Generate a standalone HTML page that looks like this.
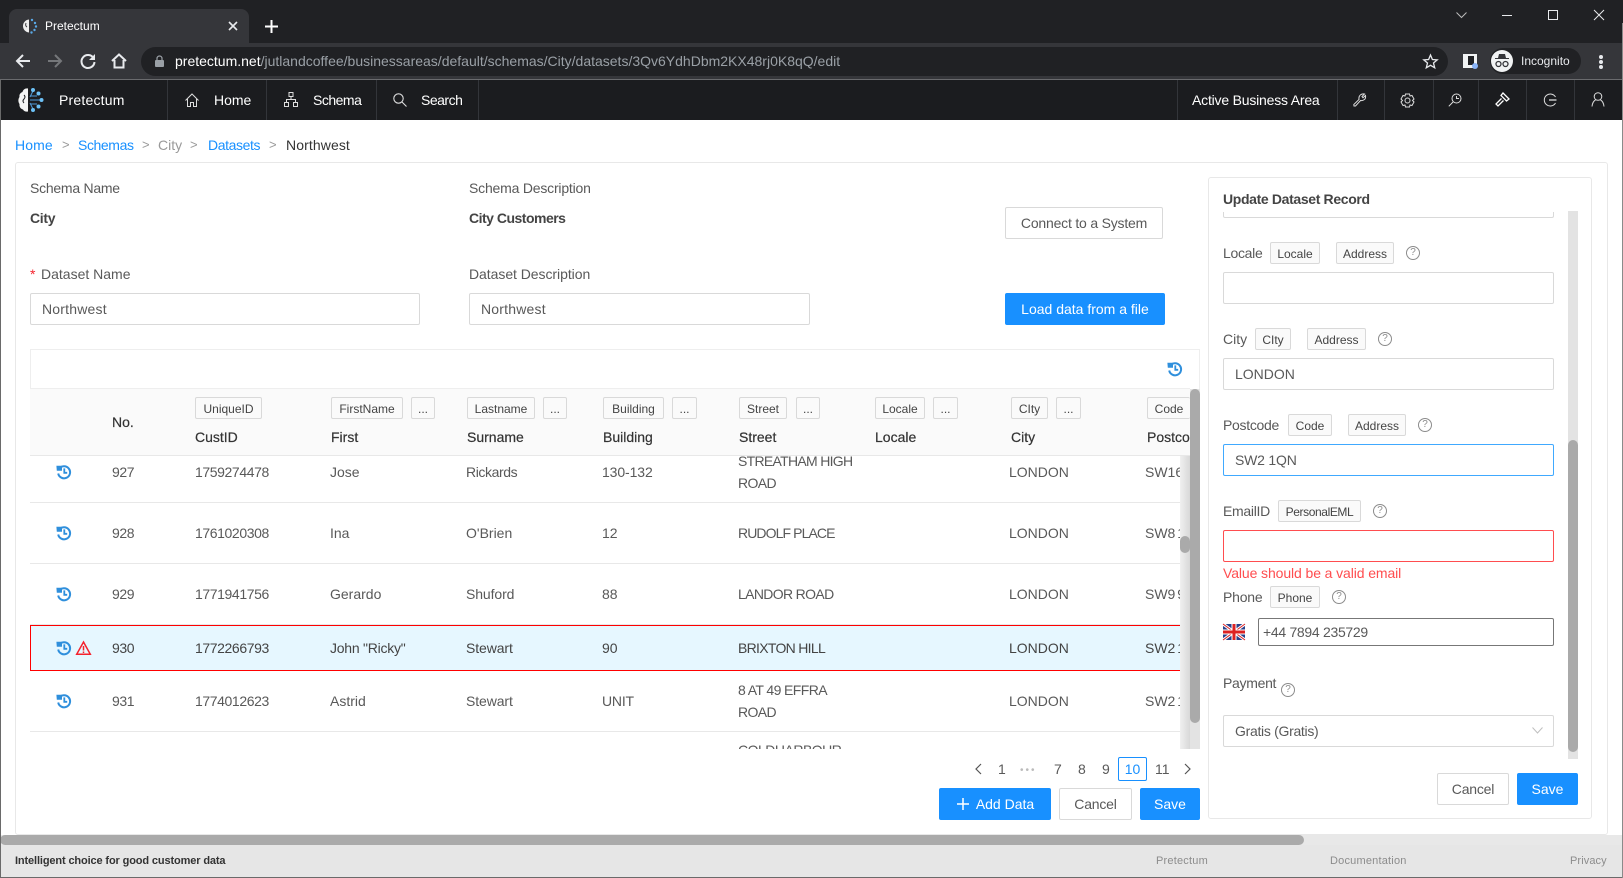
<!DOCTYPE html>
<html><head><meta charset="utf-8"><title>Pretectum</title>
<style>
*{box-sizing:border-box}
html,body{margin:0;padding:0;width:1623px;height:878px;overflow:hidden;background:#fff;font-family:"Liberation Sans",sans-serif;font-size:14px;color:#595959}
.a{position:absolute}
.t{position:absolute;white-space:nowrap;line-height:20px;height:20px}
.w{color:#fff}
.lnk{color:#1890ff}
.b{font-weight:bold;color:#444}
.h{color:#333;font-size:14px;-webkit-text-stroke:.2px #333}
.n{letter-spacing:-.4px}
.tag{position:absolute;height:22px;line-height:22px;border:1px solid #d9d9d9;border-radius:2px;background:#fafafa;font-size:12px;color:#444;text-align:center;white-space:nowrap;overflow:hidden}
.inp{position:absolute;height:32px;border:1px solid #d9d9d9;border-radius:2px;background:#fff;line-height:30px;padding-left:11px;color:#595959;white-space:nowrap}
.btn{position:absolute;height:32px;border:1px solid #d9d9d9;border-radius:2px;background:#fff;line-height:30px;text-align:center;color:#595959;white-space:nowrap}
.pri{background:#1890ff;border-color:#1890ff;color:#fff}
.v{position:absolute;top:80px;height:40px;width:1px;background:#33353a}
.line{position:absolute;height:1px;background:#e8e8e8;left:30px;width:1150px}
svg{position:absolute;overflow:visible}
.q{position:absolute;width:14px;height:14px;border:1px solid #8c8c8c;border-radius:50%;font-size:10px;line-height:12px;text-align:center;color:#8c8c8c}
.pc{word-spacing:-2px}
</style></head><body>
<svg width="0" height="0" style="position:absolute"><defs>
<symbol id="hist" viewBox="0 0 16 16"><path d="M3.200 4.800A6 6 0 1 1 2.200 9.500" fill="none" stroke="#2f8fdc" stroke-width="2"/><path d="M.4 1.800 L6 1.800 L6 6.800 L.8 6.800Z" fill="#2f8fdc"/><path d="M8.300 4.400V8.800H11.200" fill="none" stroke="#2f8fdc" stroke-width="1.800"/></symbol>
</defs></svg>

<!-- Chrome -->
<div class="a" style="left:0;top:0;width:1623px;height:43px;background:#202124"></div>
<div class="a" style="left:9px;top:9px;width:240px;height:34px;background:#35363a;border-radius:8px 8px 0 0"></div>
<div class="a" style="left:0;top:43px;width:1623px;height:36px;background:#35363a"></div>
<div class="a" style="left:0;top:79px;width:1623px;height:1px;background:#6a6b6e"></div>
<svg style="left:22px;top:18px" width="16" height="16" viewBox="0 0 16 16"><path d="M7 1.500C3 2 1 5 1 8s2 6 6 6.500Z" fill="#eee"/><path d="M4 5Q3 8 5 9" fill="none" stroke="#35363a"/><g fill="#5aa9e6"><circle cx="10" cy="2" r="1.200"/><circle cx="13" cy="5" r="1.200"/><circle cx="14" cy="8.500" r="1.200"/><circle cx="12.500" cy="12" r="1.200"/><circle cx="9.500" cy="14.500" r="1.200"/></g></svg>
<div class="t w" style="left:45px;top:16px;font-size:12px">Pretectum</div>
<svg style="left:228px;top:21px" width="10" height="10"><path d="M1 1L9 9M9 1L1 9" stroke="#e8eaed" stroke-width="1.600"/></svg>
<svg style="left:265px;top:20px" width="13" height="13"><path d="M6.500 0V13M0 6.500H13" stroke="#fff" stroke-width="2"/></svg>
<svg style="left:15px;top:53px" width="16" height="16"><path d="M15 8H2M8 2L2 8L8 14" fill="none" stroke="#e8eaed" stroke-width="2"/></svg>
<svg style="left:47px;top:53px" width="16" height="16"><path d="M1 8H14M8 2L14 8L8 14" fill="none" stroke="#75777a" stroke-width="2"/></svg>
<svg style="left:80px;top:53px" width="16" height="16"><path d="M13.500 5A6.500 6.500 0 1 0 14.500 9" fill="none" stroke="#e8eaed" stroke-width="2"/><path d="M15 1V7H9Z" fill="#e8eaed"/></svg>
<svg style="left:111px;top:53px" width="16" height="16"><path d="M1 8L8 1.500L15 8M3.500 7V14.500H12.500V7" fill="none" stroke="#e8eaed" stroke-width="2"/></svg>
<div class="a" style="left:141px;top:47px;width:1307px;height:29px;background:#202124;border-radius:15px"></div>
<svg style="left:155px;top:55px" width="9" height="12"><rect y="5" width="9" height="7" rx="1" fill="#9aa0a6"/><path d="M2 5V3.500a2.500 2.500 0 0 1 5 0V5" fill="none" stroke="#9aa0a6" stroke-width="1.200"/></svg>
<div class="t" style="left:175px;top:51px;color:#9aa0a6;font-size:14px"><span style="color:#fff">pretectum.net</span>/jutlandcoffee/businessareas/default/schemas/City/datasets/3Qv6YdhDbm2KX48rj0K8qQ/edit</div>
<svg style="left:1423px;top:54px" width="15" height="15" viewBox="0 0 15 15"><path d="M7.500 1L9.400 5.500L14.200 5.900L10.500 9L11.700 13.800L7.500 11.300L3.300 13.800L4.500 9L.8 5.900L5.600 5.500Z" fill="none" stroke="#e8eaed" stroke-width="1.300"/></svg>
<div class="a" style="left:1463px;top:54px;width:14px;height:14px;background:#f1f3f4"></div><div class="a" style="left:1468px;top:56px;width:6px;height:9px;background:#202124"></div><div class="a" style="left:1472px;top:63px;width:6px;height:6px;background:#8ab4f8;border-radius:50%"></div>
<div class="a" style="left:1490px;top:48px;width:91px;height:26px;background:#202124;border-radius:13px"></div>
<div class="a" style="left:1491px;top:50px;width:22px;height:22px;background:#f1f3f4;border-radius:50%"></div>
<svg style="left:1494px;top:54px" width="16" height="14" viewBox="0 0 16 14"><path d="M4 4L5 0H11L12 4H15V5H1V4Z" fill="#35363a"/><circle cx="4.500" cy="10" r="2.500" fill="none" stroke="#35363a" stroke-width="1.300"/><circle cx="11.500" cy="10" r="2.500" fill="none" stroke="#35363a" stroke-width="1.300"/></svg>
<div class="t" style="left:1521px;top:51px;font-size:12px;color:#e8eaed">Incognito</div>
<div class="a" style="left:1599px;top:55px;width:4px;height:4px;background:#e8eaed;border-radius:50%"></div><div class="a" style="left:1599px;top:60px;width:4px;height:4px;background:#e8eaed;border-radius:50%"></div><div class="a" style="left:1599px;top:65px;width:4px;height:4px;background:#e8eaed;border-radius:50%"></div>
<svg style="left:1456px;top:12px" width="11" height="6"><path d="M.5 .5L5.500 5.500L10.500 .5" fill="none" stroke="#bbb"/></svg>
<div class="a" style="left:1502px;top:15px;width:10px;height:1px;background:#e8eaed"></div>
<div class="a" style="left:1548px;top:10px;width:10px;height:10px;border:1px solid #e8eaed"></div>
<svg style="left:1594px;top:10px" width="10" height="10"><path d="M0 0L10 10M10 0L0 10" stroke="#e8eaed"/></svg>

<!-- App nav -->
<div class="a" style="left:0;top:80px;width:1623px;height:40px;background:#1b1c1f"></div>
<svg style="left:18px;top:87px" width="26" height="26" viewBox="0 0 26 26"><path d="M10 1.500C7 1 5 3 4.500 5C2 6 1 8 1.500 10C0 12 0 15 1.500 17C1 20 3 22 5 22.500C6 24.500 8 25 10 24.500Z" fill="#f4f4f4"/><path d="M6 8Q8 10 6 12Q4 14 6 16" fill="none" stroke="#1b1c1f" stroke-width="1"/><path d="M12 9H19M12 13H23M12 17H19M12 10L15 4M12 16L15 22" stroke="#4f9ad8" stroke-width="1" fill="none"/><g fill="#6cc0f5"><circle cx="15" cy="3" r="2"/><circle cx="20.500" cy="6.500" r="2"/><circle cx="23.500" cy="13" r="2"/><circle cx="20.500" cy="19.500" r="2"/><circle cx="15" cy="23" r="2"/></g></svg>
<div class="t w" style="left:59px;top:90px;letter-spacing:.2px">Pretectum</div>
<div class="v" style="left:167px"></div><div class="v" style="left:266px"></div><div class="v" style="left:376px"></div><div class="v" style="left:478px"></div>
<div class="v" style="left:1177px"></div><div class="v" style="left:1337px"></div><div class="v" style="left:1384px"></div><div class="v" style="left:1433px"></div><div class="v" style="left:1478px"></div><div class="v" style="left:1526px"></div><div class="v" style="left:1574px"></div>
<svg style="left:185px;top:93px" width="14" height="14" viewBox="0 0 14 14"><path d="M.5 7.500L7 1L13.500 7.500M2.500 6V13.500H5.500V9.500H8.500V13.500H11.500V6" fill="none" stroke="#ddd"/></svg>
<div class="t w" style="left:214px;top:90px">Home</div>
<svg style="left:284px;top:92px" width="14" height="15" viewBox="0 0 14 15"><g fill="none" stroke="#ddd"><rect x="5" y=".5" width="4" height="4"/><rect x=".5" y="10.500" width="4" height="4"/><rect x="9.500" y="10.500" width="4" height="4"/><path d="M7 4.500V7.500M2.500 10.500V7.500H11.500V10.500"/></g></svg>
<div class="t w" style="left:313px;top:90px;letter-spacing:-.5px">Schema</div>
<svg style="left:393px;top:93px" width="14" height="14" viewBox="0 0 14 14"><circle cx="5.500" cy="5.500" r="4.700" fill="none" stroke="#ddd" stroke-width="1.100"/><path d="M9 9L13.500 13.500" stroke="#ddd" stroke-width="1.100"/></svg>
<div class="t w" style="left:421px;top:90px;letter-spacing:-.5px">Search</div>
<div class="t w" style="left:1192px;top:90px;letter-spacing:-.2px">Active Business Area</div>
<svg style="left:1353px;top:93px" width="13" height="14" viewBox="0 0 13 14"><path d="M1 13L.8 11.500L6 6.500Q5.500 3 8 1.500Q10 .5 11.500 1L9 3.500L10 4.800L12.500 2.500Q13 5 11.500 6.500Q9.500 8 7.500 7.500L2.500 13Z" fill="none" stroke="#ddd"/></svg>
<svg style="left:1400px;top:93px" width="15" height="15" viewBox="0 0 15 15"><path d="M5.500 1H9.500L10 3L12 2.500L14 6L12.500 7.500L14 9L12 12.500L10 12L9.500 14H5.500L5 12L3 12.500L1 9L2.500 7.500L1 6L3 2.500L5 3Z" fill="none" stroke="#ddd"/><circle cx="7.500" cy="7.500" r="2.500" fill="none" stroke="#ddd"/></svg>
<svg style="left:1448px;top:93px" width="14" height="14" viewBox="0 0 14 14"><circle cx="8.500" cy="5.500" r="4.500" fill="none" stroke="#ddd"/><path d="M5 9L.8 13.300M8.500 3V5.500H11" stroke="#ddd" fill="none"/></svg>
<svg style="left:1495px;top:92px" width="15" height="15" viewBox="0 0 15 15"><path d="M8 1L14 7L11.500 9L6 3.500ZM6.500 6.500L1 12L3 14L8.500 8.500" fill="none" stroke="#fff" stroke-width="1.300"/></svg>
<svg style="left:1543px;top:93px" width="14" height="14" viewBox="0 0 14 14"><path d="M12.500 4A6 6 0 1 0 12.500 10" fill="none" stroke="#ddd"/><path d="M6 7H13.500" stroke="#ddd" stroke-width="1.300"/></svg>
<svg style="left:1591px;top:92px" width="14" height="15" viewBox="0 0 14 15"><circle cx="7" cy="4.500" r="3.800" fill="none" stroke="#ddd"/><path d="M1 14.500Q1.500 9.500 4.500 8M13 14.500Q12.500 9.500 9.500 8" fill="none" stroke="#ddd"/></svg>

<!-- Breadcrumb -->
<div class="t lnk" style="left:15px;top:135px;letter-spacing:.1px">Home</div><div class="t" style="left:62px;top:135px;color:#999;font-size:13px">&gt;</div>
<div class="t lnk" style="left:78px;top:135px;letter-spacing:-.4px">Schemas</div><div class="t" style="left:142px;top:135px;color:#999;font-size:13px">&gt;</div>
<div class="t" style="left:158px;top:135px;color:#999">City</div><div class="t" style="left:190px;top:135px;color:#999;font-size:13px">&gt;</div>
<div class="t lnk" style="left:208px;top:135px;letter-spacing:-.4px">Datasets</div><div class="t" style="left:269px;top:135px;color:#999;font-size:13px">&gt;</div>
<div class="t" style="left:286px;top:135px;color:#333;letter-spacing:.1px">Northwest</div>

<!-- Main card -->
<div class="a" style="left:15px;top:162px;width:1593px;height:673px;border:1px solid #e8e8e8;border-radius:3px"></div>
<div class="t" style="left:30px;top:178px;letter-spacing:-.25px">Schema Name</div>
<div class="t b" style="left:30px;top:208px;letter-spacing:-.3px">City</div>
<div class="t" style="left:469px;top:178px;letter-spacing:-.2px">Schema Description</div>
<div class="t b" style="left:469px;top:208px;letter-spacing:-.5px">City Customers</div>
<div class="btn" style="left:1005px;top:207px;width:158px;letter-spacing:-.2px">Connect to a System</div>
<div class="t" style="left:30px;top:264px;color:#f5222d">*</div><div class="t" style="left:41px;top:264px">Dataset Name</div>
<div class="t" style="left:469px;top:264px;letter-spacing:-.05px">Dataset Description</div>
<div class="inp" style="left:30px;top:293px;width:390px;letter-spacing:.2px">Northwest</div>
<div class="inp" style="left:469px;top:293px;width:341px;letter-spacing:.2px">Northwest</div>
<div class="btn pri" style="left:1005px;top:293px;width:160px">Load data from a file</div>

<!-- Table -->
<div class="a" style="left:30px;top:349px;width:1170px;height:40px;border:1px solid #eee;border-bottom:0"></div>
<svg style="left:1167px;top:361px" width="16" height="16"><use href="#hist"/></svg>
<div class="a" style="left:30px;top:388px;width:1160px;height:68px;background:#fafafa;border-top:1px solid #eee;border-bottom:1px solid #e8e8e8"></div>
<div class="t h" style="left:112px;top:412px">No.</div>
<div class="tag" style="left:195px;top:397px;width:67px">UniqueID</div>
<div class="tag" style="left:331px;top:397px;width:72px">FirstName</div><div class="tag" style="left:411px;top:397px;width:24px">...</div>
<div class="tag" style="left:467px;top:397px;width:68px">Lastname</div><div class="tag" style="left:543px;top:397px;width:24px">...</div>
<div class="tag" style="left:603px;top:397px;width:61px">Building</div><div class="tag" style="left:672px;top:397px;width:25px">...</div>
<div class="tag" style="left:739px;top:397px;width:48px">Street</div><div class="tag" style="left:796px;top:397px;width:24px">...</div>
<div class="tag" style="left:875px;top:397px;width:50px">Locale</div><div class="tag" style="left:933px;top:397px;width:25px">...</div>
<div class="tag" style="left:1011px;top:397px;width:37px">CIty</div><div class="tag" style="left:1056px;top:397px;width:25px">...</div>
<div class="tag" style="left:1147px;top:397px;width:43px;border-right:0">Code</div>
<div class="t h" style="left:195px;top:427px">CustID</div><div class="t h" style="left:331px;top:427px">First</div><div class="t h" style="left:467px;top:427px">Surname</div><div class="t h" style="left:603px;top:427px">Building</div><div class="t h" style="left:739px;top:427px">Street</div><div class="t h" style="left:875px;top:427px">Locale</div><div class="t h" style="left:1011px;top:427px">City</div>
<div class="a" style="left:1147px;top:427px;width:43px;height:20px;overflow:hidden"><div class="t h" style="left:0;top:0">Postcode</div></div>

<div class="a" style="left:0;top:456px;width:1180px;height:293px;overflow:hidden">
 <div class="a" style="left:30px;top:169px;width:1160px;height:46px;background:#e6f7ff;border:1px solid #f00"></div>
 <div class="line" style="top:46px"></div><div class="line" style="top:107px"></div><div class="line" style="top:168px"></div><div class="line" style="top:275px"></div>
 <svg style="left:56px;top:8px" width="16" height="16"><use href="#hist"/></svg>
 <svg style="left:56px;top:69px" width="16" height="16"><use href="#hist"/></svg>
 <svg style="left:56px;top:130px" width="16" height="16"><use href="#hist"/></svg>
 <svg style="left:56px;top:184px" width="16" height="16"><use href="#hist"/></svg>
 <svg style="left:76px;top:185px" width="15" height="14" viewBox="0 0 15 14"><path d="M7.500 1L14.300 13.300H.7Z" fill="none" stroke="#f5222d" stroke-width="1.500"/><path d="M7.500 5V9.500M7.500 10.500V12" stroke="#f5222d" stroke-width="1.500"/></svg>
 <svg style="left:56px;top:237px" width="16" height="16"><use href="#hist"/></svg>

 <div class="t n" style="left:112px;top:6px">927</div><div class="t n" style="left:195px;top:6px">1759274478</div><div class="t" style="left:330px;top:6px">Jose</div><div class="t" style="left:466px;top:6px;letter-spacing:-.4px">Rickards</div><div class="t n" style="left:602px;top:6px;letter-spacing:-.1px">130-132</div><div class="t" style="left:738px;top:-5px;letter-spacing:-.7px">STREATHAM HIGH</div><div class="t" style="left:738px;top:17px;letter-spacing:-.6px">ROAD</div><div class="t" style="left:1009px;top:6px">LONDON</div><div class="t pc" style="left:1145px;top:6px">SW16 1QN</div>
 <div class="t n" style="left:112px;top:67px">928</div><div class="t n" style="left:195px;top:67px">1761020308</div><div class="t" style="left:330px;top:67px">Ina</div><div class="t" style="left:466px;top:67px">O'Brien</div><div class="t" style="left:602px;top:67px">12</div><div class="t" style="left:738px;top:67px;letter-spacing:-.9px">RUDOLF PLACE</div><div class="t" style="left:1009px;top:67px">LONDON</div><div class="t pc" style="left:1145px;top:67px">SW8 1RZ</div>
 <div class="t n" style="left:112px;top:128px">929</div><div class="t n" style="left:195px;top:128px">1771941756</div><div class="t" style="left:330px;top:128px">Gerardo</div><div class="t" style="left:466px;top:128px;letter-spacing:-.1px">Shuford</div><div class="t" style="left:602px;top:128px">88</div><div class="t" style="left:738px;top:128px;letter-spacing:-.65px">LANDOR ROAD</div><div class="t" style="left:1009px;top:128px">LONDON</div><div class="t pc" style="left:1145px;top:128px">SW9 9PE</div>
 <div class="t n" style="left:112px;top:182px;color:#444">930</div><div class="t n" style="left:195px;top:182px;color:#444">1772266793</div><div class="t" style="left:330px;top:182px;color:#444;letter-spacing:-.25px">John "Ricky"</div><div class="t" style="left:466px;top:182px;color:#444;letter-spacing:-.1px">Stewart</div><div class="t" style="left:602px;top:182px;color:#444">90</div><div class="t" style="left:738px;top:182px;color:#444;letter-spacing:-.7px">BRIXTON HILL</div><div class="t" style="left:1009px;top:182px;color:#444">LONDON</div><div class="t pc" style="left:1145px;top:182px;color:#444">SW2 1QN</div>
 <div class="t n" style="left:112px;top:235px">931</div><div class="t n" style="left:195px;top:235px">1774012623</div><div class="t" style="left:330px;top:235px">Astrid</div><div class="t" style="left:466px;top:235px;letter-spacing:-.1px">Stewart</div><div class="t" style="left:602px;top:235px;letter-spacing:-.2px">UNIT</div><div class="t" style="left:738px;top:224px;letter-spacing:-.6px">8 AT 49 EFFRA</div><div class="t" style="left:738px;top:246px;letter-spacing:-.6px">ROAD</div><div class="t" style="left:1009px;top:235px">LONDON</div><div class="t pc" style="left:1145px;top:235px">SW2 1BZ</div>
 <div class="t" style="left:738px;top:284px;letter-spacing:-.5px">COLDHARBOUR</div>
</div>
<div class="a" style="left:1180px;top:456px;width:10px;height:293px;background:linear-gradient(90deg,#f0f0f0,#d8d8d8)"></div>
<div class="a" style="left:1180px;top:536px;width:10px;height:17px;background:#aaa;border-radius:5px"></div>
<div class="a" style="left:1190px;top:389px;width:10px;height:360px;background:#e3e3e3"></div>
<div class="a" style="left:1190px;top:389px;width:10px;height:334px;background:#aaa;border-radius:5px"></div>

<!-- Pagination -->
<svg style="left:974px;top:763px" width="8" height="12"><path d="M7 1L2 6L7 11" fill="none" stroke="#555" stroke-width="1.200"/></svg>
<div class="t" style="left:998px;top:759px">1</div>
<div class="t" style="left:1020px;top:761px;color:#bbb;font-size:10px;letter-spacing:2px">•••</div>
<div class="t" style="left:1054px;top:759px">7</div><div class="t" style="left:1078px;top:759px">8</div><div class="t" style="left:1102px;top:759px">9</div>
<div class="a" style="left:1118px;top:757px;width:29px;height:24px;border:1px solid #1890ff;border-radius:2px;color:#1890ff;text-align:center;line-height:22px">10</div>
<div class="t" style="left:1155px;top:759px">11</div>
<svg style="left:1184px;top:763px" width="8" height="12"><path d="M1 1L6 6L1 11" fill="none" stroke="#555" stroke-width="1.200"/></svg>
<div class="btn pri" style="left:939px;top:788px;width:112px;padding-left:20px">Add Data</div>
<svg style="left:957px;top:798px" width="12" height="12"><path d="M6 0V12M0 6H12" stroke="#fff" stroke-width="1.500"/></svg>
<div class="btn" style="left:1059px;top:788px;width:73px;letter-spacing:-.2px">Cancel</div>
<div class="btn pri" style="left:1140px;top:788px;width:60px">Save</div>

<!-- Update panel -->
<div class="a" style="left:1208px;top:177px;width:384px;height:642px;border:1px solid #e8e8e8;border-radius:3px"></div>
<div class="t b" style="left:1223px;top:189px;color:#444;letter-spacing:-.35px">Update Dataset Record</div>
<div class="a" style="left:1223px;top:212px;width:331px;height:6px;border:1px solid #d9d9d9;border-top:0;border-radius:0 0 2px 2px"></div>
<div class="a" style="left:1568px;top:211px;width:10px;height:548px;background:#e3e3e3"></div>
<div class="a" style="left:1568px;top:440px;width:10px;height:312px;background:#aaa;border-radius:5px"></div>

<div class="t" style="left:1223px;top:243px;letter-spacing:-.3px">Locale</div><div class="tag" style="left:1270px;top:242px;width:50px">Locale</div><div class="tag" style="left:1336px;top:242px;width:58px">Address</div><div class="q" style="left:1406px;top:246px">?</div>
<div class="inp" style="left:1223px;top:272px;width:331px"></div>
<div class="t" style="left:1223px;top:329px">City</div><div class="tag" style="left:1255px;top:328px;width:36px">CIty</div><div class="tag" style="left:1307px;top:328px;width:59px">Address</div><div class="q" style="left:1378px;top:332px">?</div>
<div class="inp" style="left:1223px;top:358px;width:331px">LONDON</div>
<div class="t" style="left:1223px;top:415px;letter-spacing:-.3px">Postcode</div><div class="tag" style="left:1288px;top:414px;width:44px">Code</div><div class="tag" style="left:1348px;top:414px;width:58px">Address</div><div class="q" style="left:1418px;top:418px">?</div>
<div class="inp" style="left:1223px;top:444px;width:331px;border-color:#40a9ff;letter-spacing:-.2px">SW2 1QN</div>
<div class="t" style="left:1223px;top:501px;letter-spacing:-.3px">EmailID</div><div class="tag" style="left:1278px;top:500px;width:83px;letter-spacing:-.4px">PersonalEML</div><div class="q" style="left:1373px;top:504px">?</div>
<div class="inp" style="left:1223px;top:530px;width:331px;border-color:#ff4d4f"></div>
<div class="t" style="left:1223px;top:563px;color:#ff4d4f;letter-spacing:-.1px">Value should be a valid email</div>
<div class="t" style="left:1223px;top:587px;letter-spacing:-.2px">Phone</div><div class="tag" style="left:1270px;top:586px;width:50px">Phone</div><div class="q" style="left:1332px;top:590px">?</div>
<svg style="left:1223px;top:624px" width="22" height="16" viewBox="0 0 22 16"><rect width="22" height="16" fill="#27408b"/><path d="M0 0L22 16M22 0L0 16" stroke="#fff" stroke-width="3"/><path d="M0 0L22 16M22 0L0 16" stroke="#d22" stroke-width="1"/><path d="M11 0V16M0 8H22" stroke="#fff" stroke-width="5"/><path d="M11 0V16M0 8H22" stroke="#d22" stroke-width="3"/></svg>
<div class="inp" style="left:1258px;top:618px;width:296px;height:28px;line-height:26px;border-color:#777;padding-left:4px;letter-spacing:-.3px">+44 7894 235729</div>
<div class="t" style="left:1223px;top:673px;letter-spacing:-.3px">Payment</div><div class="q" style="left:1281px;top:683px">?</div>
<div class="inp" style="left:1223px;top:715px;width:331px;letter-spacing:-.3px">Gratis (Gratis)</div>
<svg style="left:1532px;top:727px" width="11" height="7"><path d="M.5 .5L5.500 6L10.500 .5" fill="none" stroke="#bfbfbf"/></svg>
<div class="btn" style="left:1437px;top:773px;width:72px;letter-spacing:-.2px">Cancel</div>
<div class="btn pri" style="left:1517px;top:773px;width:61px">Save</div>

<!-- Bottom -->
<div class="a" style="left:0;top:835px;width:1623px;height:10px;background:#e8e8e8"></div>
<div class="a" style="left:0;top:835px;width:1304px;height:10px;background:#aaa;border-radius:5px"></div>
<div class="a" style="left:0;top:845px;width:1623px;height:32px;background:#e6e6e6"></div>
<div class="a" style="left:0;top:877px;width:1623px;height:1px;background:#6a6a6a"></div>
<div class="t" style="left:15px;top:851px;font-size:11px;color:#333;font-weight:bold;letter-spacing:-.13px">Intelligent choice for good customer data</div>
<div class="t" style="left:1156px;top:851px;font-size:11px;color:#8c8c8c;letter-spacing:.2px">Pretectum</div>
<div class="t" style="left:1330px;top:851px;font-size:11px;color:#8c8c8c;letter-spacing:.2px">Documentation</div>
<div class="t" style="left:1570px;top:851px;font-size:11px;color:#8c8c8c;letter-spacing:.1px">Privacy</div>
<div class="a" style="left:0;top:80px;width:1px;height:798px;background:#6a6a6a"></div>
<div class="a" style="left:1622px;top:23px;width:1px;height:855px;background:#8a8a8a"></div>
</body></html>
